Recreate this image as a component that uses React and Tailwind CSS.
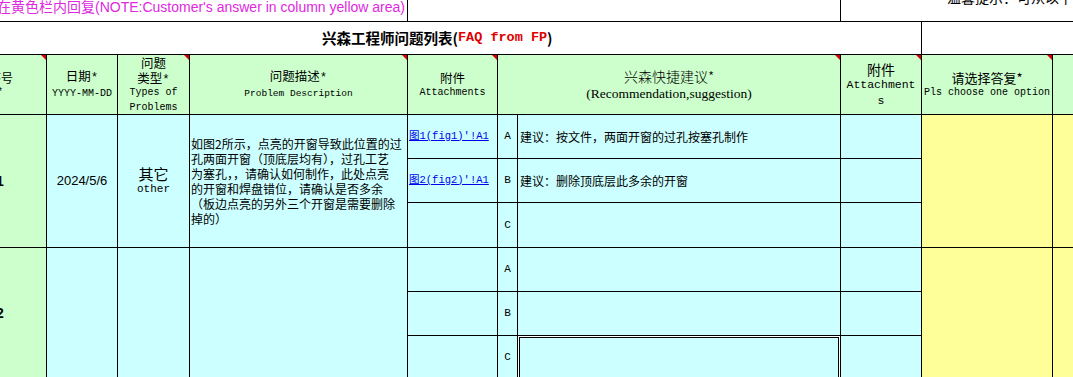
const cjk = "[font-family:'Noto_Sans_CJK_SC',sans-serif]";
const mono = "[font-family:'Liberation_Mono','Noto_Sans_CJK_SC',monospace]";
const serif = "[font-family:'Liberation_Serif','Noto_Sans_CJK_SC',serif]";
const sans = "[font-family:'Liberation_Sans','Noto_Sans_CJK_SC',sans-serif]";

const rows = [
  {
    no: 1,
    date: "2024/5/6",
    type: ["其它", "other"],
    desc: [
      "如图2所示，点亮的开窗导致此位置的过",
      "孔两面开窗（顶底层均有），过孔工艺",
      "为塞孔，，请确认如何制作，此处点亮",
      "的开窗和焊盘错位，请确认是否多余",
      "（板边点亮的另外三个开窗是需要删除",
      "掉的）",
    ],
    links: ["图1(fig1)'!A1", "图2(fig2)'!A1", ""],
    recs: ["建议：按文件，两面开窗的过孔按塞孔制作", "建议：删除顶底层此多余的开窗", ""],
  },
  {
    no: 2,
    date: "",
    type: null,
    desc: [],
    links: ["", "", ""],
    recs: ["", "", ""],
    selected: 2,
  },
];

function Flag() {
  return (
    <span className="absolute right-0 top-0 h-[5px] w-[5px] bg-[#d40000] [clip-path:polygon(0_0,100%_0,100%_100%)]" />
  );
}

const head = "relative flex flex-col items-center justify-center bg-[#ccffcc] text-black";

export default function App() {
  return (
    <div className="h-[377px] w-[1073px] overflow-hidden bg-white">
      <div className="ml-[-46px] grid w-[1125px] grid-cols-[92px_70px_71px_217px_89px_19px_322px_80px_130px_1fr] grid-rows-[21px_32px_59px_43px_43px_44px_43px_43px_43px] gap-px bg-black">
        {/* note row */}
        <div className={`col-span-4 flex justify-end overflow-hidden whitespace-nowrap bg-white pr-[2px] text-[14px] leading-[15px] text-[#e028e0] ${sans}`}>
          请在黄色栏内回复(NOTE:Customer's answer in column yellow area)
        </div>
        <div className="col-span-3 bg-white" />
        <div className={`col-span-3 overflow-hidden whitespace-nowrap bg-white pl-[106px] text-[14px] text-black ${cjk}`}>
          <span className="-mt-[11px] block leading-[16px]">温馨提示：可从以下三个选项中选择</span>
        </div>

        {/* title row */}
        <div className={`col-span-8 flex items-center whitespace-nowrap bg-white pl-[368px] text-[14.5px] font-bold text-black ${cjk}`}>
          兴森工程师问题列表(
          <span className={`text-[13.5px] text-[#e00000] ${mono}`}>FAQ from FP</span>)
        </div>
        <div className="col-span-2 bg-white" />

        {/* header row */}
        <div className={`${head} !items-end pr-[33px] leading-[15px]`}>
          <span className={`text-[12px] ${cjk}`}>序号</span>
          <span className={`mr-[10px] text-[10px] ${mono}`}>No.*</span>
          <Flag />
        </div>
        <div className={`${head} leading-[15px]`}>
          <span className={`text-[12.5px] ${cjk}`}>日期<span className={mono}>*</span></span>
          <span className={`text-[10px] ${mono}`}>YYYY-MM-DD</span>
        </div>
        <div className={`${head}`}>
          <span className={`h-[15px] text-[12.5px] leading-[15px] ${cjk}`}>问题</span>
          <span className={`h-[15px] text-[12.5px] leading-[15px] ${cjk}`}>类型<span className={mono}>*</span></span>
          <span className={`h-[15px] whitespace-pre text-[10px] leading-[15px] ${mono}`}>Types of</span>
          <span className={`h-[15px] text-[10px] leading-[15px] ${mono}`}>Problems</span>
          <Flag />
        </div>
        <div className={`${head} leading-[15px]`}>
          <span className={`text-[12.5px] ${cjk}`}>问题描述<span className={mono}>*</span></span>
          <span className={`whitespace-pre text-[9.5px] ${mono}`}>Problem Description</span>
          <Flag />
        </div>
        <div className={`${head} leading-[15px]`}>
          <span className={`text-[12.5px] ${cjk}`}>附件</span>
          <span className={`text-[10px] ${mono}`}>Attachments</span>
          <Flag />
        </div>
        <div className={`${head} col-span-2 leading-[17px]`}>
          <span className={`text-[14px] font-light ${cjk}`}>兴森快捷建议*</span>
          <span className={`text-[13.5px] font-normal ${serif}`}>(Recommendation,suggestion)</span>
          <Flag />
        </div>
        <div className={`${head} leading-[16px]`}>
          <span className={`text-[14px] ${cjk}`}>附件</span>
          <span className={`text-[11.5px] ${mono}`}>Attachment</span>
          <span className={`text-[11.5px] ${mono}`}>s</span>
          <Flag />
        </div>
        <div className={`${head} leading-[15px]`}>
          <span className={`text-[13px] ${cjk}`}>请选择答复*</span>
          <span className={`whitespace-pre text-[10px] ${mono}`}>Pls choose one option</span>
          <Flag />
        </div>
        <div className="bg-[#ccffcc]" />

        {/* data rows */}
        {rows.map((r) => (
          <Row key={r.no} r={r} />
        ))}
      </div>
    </div>
  );
}

function Row({ r }) {
  const letters = ["A", "B", "C"];
  return (
    <>
      <div className={`row-span-3 flex items-center justify-center bg-[#ccffcc] text-[14px] font-bold text-black ${sans}`}>
        {r.no}
      </div>
      <div className={`row-span-3 flex items-center justify-center bg-[#ccffff] text-[13px] text-black ${sans}`}>
        {r.date}
      </div>
      <div className="row-span-3 flex flex-col items-center justify-center bg-[#ccffff] text-black">
        {r.type && (
          <>
            <span className={`text-[15px] leading-[17px] ${cjk}`}>{r.type[0]}</span>
            <span className={`text-[11px] leading-[15px] ${mono}`}>{r.type[1]}</span>
          </>
        )}
      </div>
      <div className={`row-span-3 flex flex-col justify-center bg-[#ccffff] pl-[1px] text-[12px] leading-[15px] text-black ${cjk}`}>
        {r.desc.map((line) => (
          <span key={line} className="whitespace-nowrap">
            {line}
          </span>
        ))}
      </div>
      {letters.map((l, i) => (
        <Option key={l} l={l} i={i} r={r} />
      ))}
    </>
  );
}

function Option({ l, i, r }) {
  return (
    <>
      <div className={`flex items-center bg-[#ccffff] pl-[1px] text-[10.5px] text-[#0000ee] underline ${mono}`}>
        {r.links[i]}
      </div>
      <div className={`flex items-center justify-center bg-[#ccffff] text-[11px] text-black ${mono}`}>{l}</div>
      <div
        className={`flex items-center bg-[#ccffff] pl-[2px] text-[12px] text-black ${cjk} ${
          r.selected === i ? "shadow-[inset_0_0_0_1px_#fff,inset_0_0_0_2px_#000]" : ""
        }`}
      >
        {r.recs[i]}
      </div>
      <div className="bg-[#ccffff]" />
      {i === 0 && (
        <>
          <div className="row-span-3 bg-[#ffff99]" />
          <div className="row-span-3 bg-[#ffff99]" />
        </>
      )}
    </>
  );
}
